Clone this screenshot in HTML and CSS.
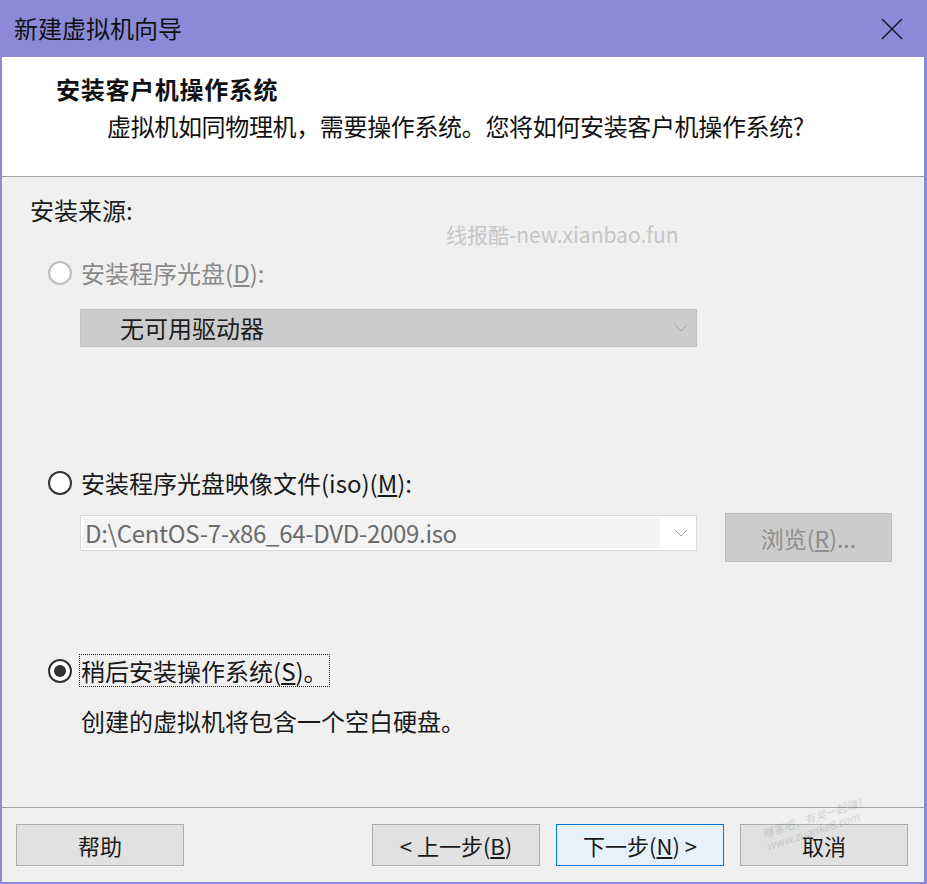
FILE: index.html
```html
<!DOCTYPE html>
<html lang="zh-CN">
<head>
<meta charset="utf-8">
<title>新建虚拟机向导</title>
<link rel="stylesheet" href="styles.css">
</head>
<body>
<div class="window">
  <div class="titlebar">
    <span class="title">新建虚拟机向导</span>
    <svg class="close" width="22" height="22" viewBox="0 0 22 22"><path d="M1 1 L21 21 M21 1 L1 21" stroke="#1b1b2b" stroke-width="1.6" fill="none"/></svg>
  </div>
  <div class="main">
    <div class="header">
      <div class="h-title">安装客户机操作系统</div>
      <div class="h-sub">虚拟机如同物理机，需要操作系统。您将如何安装客户机操作系统?</div>
    </div>
    <div class="body">
      <div class="watermark">线报酷-new.xianbao.fun</div>
      <div class="section-label">安装来源:</div>

      <div class="radio-row row1 disabled">
        <span class="radio"></span>
        <span class="label">安装程序光盘(<u>D</u>):</span>
      </div>
      <div class="select disabled-select">
        <span class="select-text">无可用驱动器</span>
        <svg class="chev" width="14" height="8" viewBox="0 0 14 8"><path d="M1 1 L7 7 L13 1" stroke="#a3a3a3" stroke-width="1" fill="none"/></svg>
      </div>

      <div class="radio-row row2">
        <span class="radio"></span>
        <span class="label">安装程序光盘映像文件(iso)(<u>M</u>):</span>
      </div>
      <div class="iso-row">
        <div class="combo">
          <span class="combo-text">D:\CentOS-7-x86_64-DVD-2009.iso</span>
          <svg class="chev" width="14" height="8" viewBox="0 0 14 8"><path d="M1 1 L7 7 L13 1" stroke="#a3a3a3" stroke-width="1" fill="none"/></svg>
        </div>
        <div class="browse">浏览(<u>R</u>)...</div>
      </div>

      <div class="radio-row row3">
        <span class="radio checked"><span class="dot"></span></span>
        <span class="label focus">稍后安装操作系统(<u>S</u>)。</span>
      </div>
      <div class="desc">创建的虚拟机将包含一个空白硬盘。</div>
    </div>
    <div class="footer">
      <div class="btn">帮助</div>
      <div class="spacer"></div>
      <div class="btn">&lt; 上一步(<u>B</u>)</div>
      <div class="btn primary">下一步(<u>N</u>) &gt;</div>
      <div class="btn">取消</div>
      <div class="stamp">赚客吧，有奖一起赚！<br>www.zuanke8.com</div>
    </div>
  </div>
</div>
</body>
</html>
```

FILE: styles.css
```css
* { box-sizing: border-box; }
html, body { margin: 0; padding: 0; }
body {
  width: 927px;
  height: 884px;
  overflow: hidden;
  font-family: "Noto Sans CJK SC", "Noto Sans", sans-serif;
  font-size: 24px;
  color: #1a1a1a;
  background: #f0f0f0;
}
.window {
  width: 927px;
  height: 884px;
  display: flex;
  flex-direction: column;
}
.titlebar {
  height: 57px;
  flex: none;
  background: #8c8ad8;
  display: flex;
  align-items: center;
  justify-content: space-between;
  padding: 0 24px 0 14px;
}
.title {
  font-size: 24px;
  line-height: 32px;
  color: #111;
  margin-top: -2px;
}
.close { display: block; }
.main {
  flex: 1;
  display: flex;
  flex-direction: column;
  border-left: 2px solid #8c8ad8;
  border-right: 3px solid #8c8ad8;
  border-bottom: 2px solid #8c8ad8;
  min-height: 0;
}
.header {
  height: 120px;
  flex: none;
  background: #ffffff;
  border-bottom: 1px solid #a0a0a0;
  padding: 16px 0 0 54px;
}
.h-title {
  font-weight: bold;
  line-height: 32px;
  letter-spacing: 0.7px;
  color: #111;
}
.h-sub {
  line-height: 32px;
  margin: 5px 0 0 51px;
  letter-spacing: -0.35px;
  color: #111;
}
.body {
  flex: 1;
  position: relative;
  padding: 17px 0 0 28px;
  background: #f0f0f0;
}
.watermark {
  position: absolute;
  left: 444px;
  top: 44px;
  font-size: 21px;
  line-height: 27px;
  color: #c6c6c6;
}
.section-label {
  line-height: 32px;
}
.radio-row {
  display: flex;
  align-items: center;
  height: 32px;
  margin-left: 18px;
}
.row1 { margin-top: 31px; }
.row2 { margin-top: 120px; }
.row3 { margin-top: 92px; height: 33px; }
.radio {
  width: 24px;
  height: 24px;
  flex: none;
  border-radius: 50%;
  border: 2px solid #333333;
  background: #ffffff;
  display: flex;
  align-items: center;
  justify-content: center;
}
.disabled .radio {
  border-color: #bcbcbc;
}
.label {
  margin-left: 9px;
  line-height: 32px;
  color: #1a1a1a;
}
.disabled .label { color: #8a8a8a; }
.label.focus {
  margin-left: 7px;
  padding: 0 1px;
  line-height: 31px;
  border: 1px dotted #222;
}
.dot {
  width: 12px;
  height: 12px;
  border-radius: 50%;
  background: #333333;
}
.select {
  margin: 20px 0 0 50px;
  width: 617px;
  height: 38px;
  background: #cccccc;
  border: 1px solid #c4c4c4;
  display: flex;
  align-items: center;
  justify-content: space-between;
  padding: 0 8px 0 39px;
}
.select-text {
  line-height: 32px;
  color: #1e1e1e;
}
.chev { display: block; flex: none; }
.iso-row {
  display: flex;
  align-items: flex-start;
  margin: 14px 0 0 50px;
}
.combo {
  margin-top: 2px;
  width: 617px;
  height: 36px;
  background: #ffffff;
  border: 1px solid #d9d9d9;
  display: flex;
  align-items: center;
  justify-content: space-between;
  padding: 2px 8px 2px 2px;
}
.combo-text {
  height: 30px;
  width: 577px;
  background: #f3f3f3;
  line-height: 30px;
  padding-left: 2px;
  letter-spacing: -0.3px;
  color: #6b6b6b;
}
.browse {
  margin-left: 28px;
  width: 167px;
  height: 49px;
  background: #cccccc;
  border: 1px solid #bfbfbf;
  color: #8e8e8e;
  font-size: 23px;
  display: flex;
  align-items: center;
  justify-content: center;
  padding-top: 1px;
}
.desc {
  margin: 18px 0 0 51px;
  line-height: 32px;
}
.footer {
  flex: none;
  height: 75px;
  border-top: 1px solid #a0a0a0;
  display: flex;
  align-items: flex-start;
  gap: 16px;
  padding: 16px 16px 0 14px;
  position: relative;
}
.spacer { flex: 1; }
.btn {
  width: 168px;
  height: 42px;
  background: #e1e1e1;
  border: 1px solid #adadad;
  display: flex;
  align-items: center;
  justify-content: center;
  font-size: 22px;
  color: #1a1a1a;
}
.btn.primary {
  background: #e5f1fb;
  border-color: #0078d7;
}
.stamp {
  position: absolute;
  left: 760px;
  top: 2px;
  font-size: 11px;
  line-height: 13px;
  color: #000;
  opacity: 0.12;
  transform: rotate(-18deg);
  font-style: italic;
  white-space: nowrap;
  pointer-events: none;
}
```
